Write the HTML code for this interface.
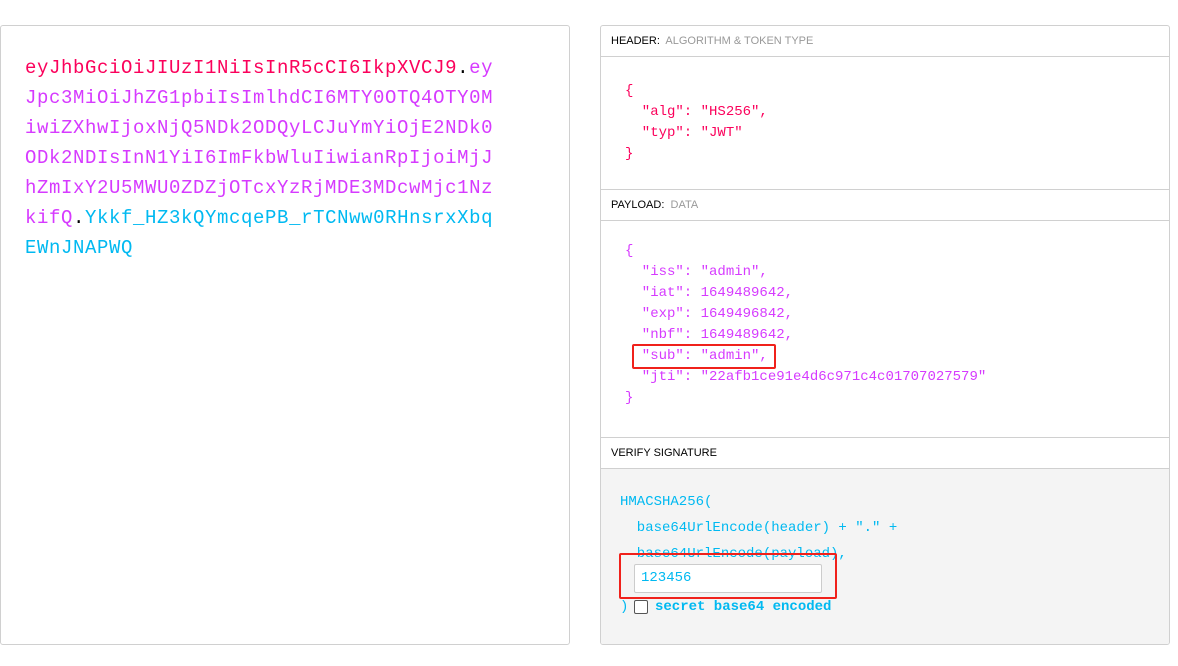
<!DOCTYPE html>
<html><head><style>
body{margin:0;width:1178px;height:666px;background:#fff;position:relative;font-family:"Liberation Sans",sans-serif;overflow:hidden}
.box{position:absolute;border:1px solid #d0d0d0;border-radius:3px;box-sizing:border-box}
.mono{font-family:"Liberation Mono",monospace}
.tok{position:absolute;left:25px;top:53px;font-size:19px;line-height:30px;letter-spacing:0.6px;white-space:pre}
.r{color:#fb015b}.p{color:#d63aff}.c{color:#00b9f1}.k{color:#000}
.tt{position:absolute;left:0;right:0;height:31px;border-bottom:1px solid #d0d0d0;font-size:11px;color:#000;line-height:31px;padding-left:10px;box-sizing:border-box}
.tt span{color:#999}
.code{position:absolute;font-size:14px;line-height:21px;white-space:pre}
.rb{position:absolute;border:2px solid #f0211b;border-radius:2px;box-sizing:border-box}
</style></head><body>
<div class="box" style="left:0;top:25px;width:570px;height:620px"></div>
<div class="tok mono"><span class="r">eyJhbGciOiJIUzI1NiIsInR5cCI6IkpXVCJ9</span><span class="k">.</span><span class="p">ey
Jpc3MiOiJhZG1pbiIsImlhdCI6MTY0OTQ4OTY0M
iwiZXhwIjoxNjQ5NDk2ODQyLCJuYmYiOjE2NDk0
ODk2NDIsInN1YiI6ImFkbWluIiwianRpIjoiMjJ
hZmIxY2U5MWU0ZDZjOTcxYzRjMDE3MDcwMjc1Nz
kifQ</span><span class="k">.</span><span class="c">Ykkf_HZ3kQYmcqePB_rTCNww0RHnsrxXbq
EWnJNAPWQ</span></div>

<div class="box" style="left:600px;top:25px;width:570px;height:620px;overflow:hidden">
<div class="tt" style="top:0">HEADER:&nbsp; <span>ALGORITHM &amp; TOKEN TYPE</span></div>
<div class="tt" style="top:163px;border-top:1px solid #d0d0d0;height:32px">PAYLOAD:&nbsp; <span>DATA</span></div>
<div class="tt" style="top:411px;border-top:1px solid #d0d0d0;height:32px">VERIFY SIGNATURE</div>
<div style="position:absolute;left:0;right:0;top:443px;bottom:0;background:#f4f4f4"></div>
</div>
<div class="code mono r" style="left:625px;top:81px">{
  "alg": "HS256",
  "typ": "JWT"
}</div>
<div class="code mono p" style="left:625px;top:241px">{
  "iss": "admin",
  "iat": 1649489642,
  "exp": 1649496842,
  "nbf": 1649489642,
  "sub": "admin",
  "jti": "22afb1ce91e4d6c971c4c01707027579"
}</div>
<div class="rb" style="left:632px;top:344px;width:144px;height:25px"></div>
<div class="code mono c" style="left:620px;top:489px;line-height:26px">HMACSHA256(
  base64UrlEncode(header) + "." +
  base64UrlEncode(payload),</div>
<div style="position:absolute;left:634px;top:564px;width:188px;height:29px;background:#fff;border:1px solid #ccc;border-radius:2px;box-sizing:border-box;font-family:'Liberation Mono',monospace;font-size:14px;color:#00b9f1;line-height:27px;padding-left:6px">123456</div>
<div class="rb" style="left:619px;top:553px;width:218px;height:46px"></div>
<div class="mono c" style="position:absolute;left:620px;top:598px;font-size:14px;line-height:18px">)</div>
<div style="position:absolute;left:634px;top:600px;width:12px;height:12px;border:1px solid #555;border-radius:2px;background:#fff"></div>
<div class="mono c" style="position:absolute;left:655px;top:598px;font-size:14px;line-height:18px;font-weight:bold">secret base64 encoded</div>
</body></html>
